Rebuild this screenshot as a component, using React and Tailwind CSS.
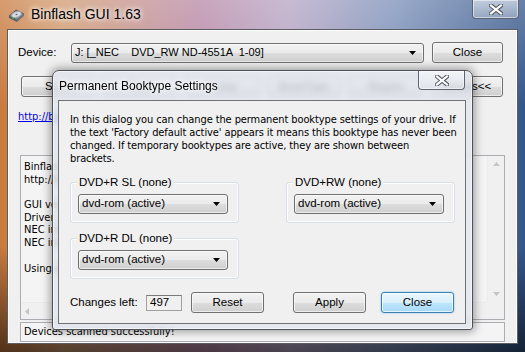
import React from "react";

const ui = "font-['Liberation_Sans',Arial,sans-serif]";
const body = "font-['DejaVu_Sans_Condensed','DejaVu_Sans',sans-serif]";

const Arrow = () => (
  <svg width="7" height="4" viewBox="0 0 7 4" className="shrink-0">
    <path d="M0 0h7L3.5 4z" fill="#000" />
  </svg>
);

const Combo = ({ text, className = "", size = "text-[11.5px]" }) => (
  <div
    className={`flex items-center justify-between h-[20px] pl-[3px] pr-[7px] rounded-[3px] border border-[#707070] bg-[linear-gradient(to_bottom,#f2f2f2_0%,#ebebeb_50%,#dddddd_51%,#cfcfcf_100%)] shadow-[inset_0_0_0_1px_rgba(255,255,255,0.6)] text-black whitespace-pre ${size} ${className}`}
  >
    <span>{text}</span>
    <Arrow />
  </div>
);

const Btn = ({ children, className = "", active = false }) => (
  <button
    className={`h-[21px] rounded-[3px] border text-[11.5px] text-black ${
      active
        ? "border-[#3c7fb1] bg-[linear-gradient(to_bottom,#eaf6fd_0%,#d9f0fc_50%,#bee6fd_51%,#a7d9f5_100%)] shadow-[inset_0_0_0_1px_rgba(255,255,255,0.7),0_0_2px_#6fc1ee]"
        : "border-[#707070] bg-[linear-gradient(to_bottom,#f2f2f2_0%,#ebebeb_50%,#dddddd_51%,#cfcfcf_100%)] shadow-[inset_0_0_0_1px_rgba(255,255,255,0.6)]"
    } ${className}`}
  >
    {children}
  </button>
);

const CloseGlyph = () => (
  <svg width="14" height="11" viewBox="0 0 14 11">
    <path
      d="M2 1.5L12 9.5M12 1.5L2 9.5"
      stroke="#505560"
      strokeWidth="4.2"
      strokeLinecap="square"
    />
    <path
      d="M2 1.5L12 9.5M12 1.5L2 9.5"
      stroke="#fff"
      strokeWidth="2.2"
      strokeLinecap="square"
    />
  </svg>
);

const CaptionClose = ({ className = "" }) => (
  <div
    className={`flex items-center justify-center w-[47px] h-[19px] rounded-b-[4px] border border-t-0 border-[#5c6570] bg-[linear-gradient(to_bottom,rgba(255,255,255,0.55),rgba(220,225,232,0.35))] shadow-[inset_0_0_0_1px_rgba(255,255,255,0.5)] ${className}`}
  >
    <CloseGlyph />
  </div>
);

const Group = ({ label, children }) => (
  <div className="relative w-[169px] rounded-[3px] border border-[#d5dfe5] shadow-[inset_0_0_0_1px_#fff] pt-[11px] pl-[7px] pr-[10px] pb-[8px]">
    <span className="absolute -top-[8px] left-[6px] px-[2px] bg-[#f0f0f0] text-[11.5px] leading-[14px]">
      {label}
    </span>
    {children}
  </div>
);

const DriveIcon = () => (
  <svg width="17" height="15" viewBox="0 0 17 15">
    <path d="M1 9l7-6 8 4-7 6z" fill="#8a9099" stroke="#4a4f55" strokeWidth="0.8" />
    <path d="M1 9v2l8 4v-2z" fill="#5a5f66" />
    <path d="M9 13v2l7-6V7z" fill="#70767e" />
    <ellipse cx="8.5" cy="7.5" rx="5" ry="2.6" fill="#d8dde3" stroke="#9aa2ab" strokeWidth="0.6" transform="rotate(-18 8.5 7.5)" />
    <ellipse cx="8.5" cy="7.5" rx="1.2" ry="0.7" fill="#6a7078" transform="rotate(-18 8.5 7.5)" />
    <path d="M4 10.5l2 1" stroke="#38c038" strokeWidth="1.2" />
  </svg>
);

const logLines = [
  "Binflash GUI 1.63",
  "http://binflash.cdfreaks.com",
  "",
  "GUI version: 1.63",
  "Driver: SPTI",
  "NEC interface version: 1.41",
  "NEC interface initialized",
  "",
  "Using device J:",
];

const intro = [
  "In this dialog you can change the permanent booktype settings of your drive. If",
  "the text 'Factory default active' appears it means this booktype has never been",
  "changed. If temporary booktypes are active, they are shown between",
  "brackets.",
];

export default function App() {
  return (
    <div
      className={`relative w-[525px] h-[352px] overflow-hidden ${ui} bg-[linear-gradient(to_bottom,rgba(255,255,255,0.25),rgba(255,255,255,0)_30%,rgba(0,0,0,0)_70%,rgba(0,0,0,0.6)),linear-gradient(to_right,#c97a3e_0%,#d09a70_12%,#b888a6_38%,#b6a4c4_55%,#7a8fb8_75%,#34568a_100%)]`}
    >
      {/* main window caption */}
      <div className="flex justify-between h-[29px] pl-[8px] pr-[6px]">
        <div className="flex items-center gap-[6px] self-center">
          <DriveIcon />
          <span className="text-[14px] text-black [text-shadow:0_0_7px_#fff,0_0_4px_#fff]">
            Binflash GUI 1.63
          </span>
        </div>
        <CaptionClose />
      </div>

      {/* main window client */}
      <div className="mx-[7px] h-[315px] border border-[#5d5e62] bg-[#f0f0f0] shadow-[inset_0_0_0_1px_#fcfcfc]">
        <div className="flex items-center mt-[12px] pl-[10px]">
          <span className="w-[53px] text-[11.5px]">Device:</span>
          <Combo
            text="J: [_NEC    DVD_RW ND-4551A  1-09]"
            size="text-[11px]"
            className="w-[353px]"
          />
          <Btn className="ml-[8px] w-[71px] h-[20px]">Close</Btn>
        </div>
        <div className="flex gap-[8px] mt-[13px] pl-[13px]">
          <Btn className="w-[74px] h-[20px]">Scan</Btn>
          <Btn className="w-[74px] h-[20px]">Flash</Btn>
          <Btn className="w-[74px] h-[20px]">Dump</Btn>
          <Btn className="w-[74px] h-[20px]">BookType</Btn>
          <Btn className="w-[74px] h-[20px]">Region</Btn>
          <Btn className="w-[72px] h-[20px]">Details&lt;&lt;</Btn>
        </div>
        <div className={`mt-[13px] pl-[10px] text-[11px] leading-[14px] ${body}`}>
          <span className="text-[#0000ee] underline">http://binflash.cdfreaks.com</span>
        </div>
        <div className={`mt-[31px] ml-[12px] w-[485px] h-[165px] flex border border-[#abadb3] bg-[#f4f4f4] ${body}`}>
          <div className="flex-1 flex flex-col">
            <div className="flex-1 pl-[3px] pt-[5px] text-[11px] leading-[12.7px] whitespace-pre">
              {logLines.map((l, i) => (
                <div key={i} className="h-[12.7px]">{l}</div>
              ))}
            </div>
            <div className="h-[17px] flex items-center pl-[4px] border-t border-[#ececec] bg-[#f0f0f0]">
              <svg width="4" height="7" viewBox="0 0 4 7"><path d="M4 0v7L0 3.5z" fill="#c4c4c4" /></svg>
            </div>
          </div>
          <div className="w-[17px] flex flex-col">
            <div className="flex-1 flex flex-col items-center justify-between py-[6px] border-l border-[#ececec] bg-[#f0f0f0]">
              <svg width="7" height="4" viewBox="0 0 7 4"><path d="M0 4h7L3.5 0z" fill="#c4c4c4" /></svg>
              <svg width="7" height="4" viewBox="0 0 7 4"><path d="M0 0h7L3.5 4z" fill="#c4c4c4" /></svg>
            </div>
            <div className="h-[17px] bg-[#f0f0f0]" />
          </div>
        </div>
        <div className={`mt-[2px] ml-[12px] w-[485px] h-[20px] flex items-center pl-[3px] border border-[#abadb3] bg-[#f4f4f4] text-[11px] ${body}`}>
          Devices scanned successfully!
        </div>
      </div>

      {/* Permanent Booktype Settings dialog */}
      <div className="absolute left-[52px] top-[70px] w-[421px] h-[260px] rounded-t-[7px] rounded-b-[3px] border border-[#4e5256] bg-[rgba(226,231,238,0.78)] backdrop-blur-[3px] shadow-[0_0_9px_2px_rgba(0,0,0,0.35),inset_0_0_0_1px_rgba(255,255,255,0.55)] flex flex-col pl-[5px] pr-[6px] pb-[5px]">
        <div className="flex justify-between h-[29px]">
          <span className="self-center pl-[1px] text-[12px] [text-shadow:0_0_7px_#fff,0_0_4px_#fff]">
            Permanent Booktype Settings
          </span>
          <CaptionClose className="mr-[1px]" />
        </div>
        <div className="flex-1 border border-[#6f7275] bg-[#f0f0f0] pl-[11px] pr-[10px]">
          <p className={`mt-[12px] text-[11px] leading-[13px] tracking-[-0.1px] whitespace-nowrap ${body}`}>
            {intro.map((l, i) => (
              <span key={i} className="block">{l}</span>
            ))}
          </p>
          <div className="flex justify-between mt-[17px]">
            <Group label="DVD+R SL (none)">
              <Combo text="dvd-rom (active)" className="w-[150px]" />
            </Group>
            <Group label="DVD+RW (none)">
              <Combo text="dvd-rom (active)" className="w-[150px]" />
            </Group>
          </div>
          <div className="mt-[15px]">
            <Group label="DVD+R DL (none)">
              <Combo text="dvd-rom (active)" className="w-[150px]" />
            </Group>
          </div>
          <div className="flex items-center mt-[13px]">
            <span className="w-[76px] text-[11.5px]">Changes left:</span>
            <div className="w-[36px] h-[16px] flex items-center pl-[3px] border border-[#a0a0a0] border-t-[#7a7a7a] bg-[#f0f0f0] text-[11.5px]">
              497
            </div>
            <Btn className="ml-[9px] w-[73px]">Reset</Btn>
            <Btn className="ml-[29px] w-[73px]">Apply</Btn>
            <Btn active className="ml-[15px] w-[73px]">Close</Btn>
          </div>
        </div>
      </div>
    </div>
  );
}
